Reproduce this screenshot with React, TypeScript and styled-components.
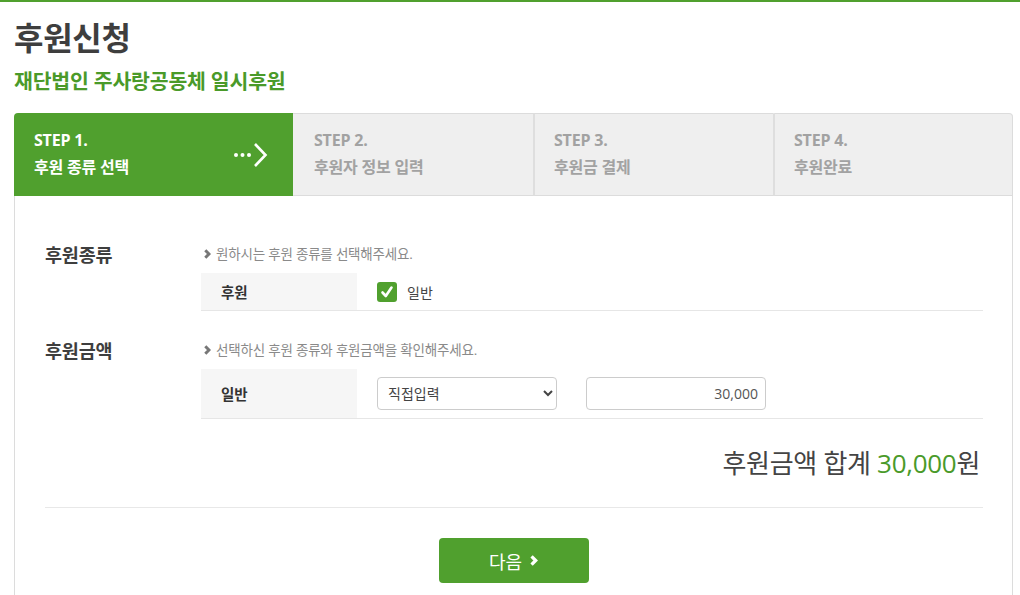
import React from "react";
import styled, { createGlobalStyle } from "styled-components";

const GREEN = "#50a02e";
const FONT = `"Open Sans", "Noto Sans CJK KR", sans-serif`;

const Global = createGlobalStyle`
  html, body { margin: 0; padding: 0; background: #fff; }
  body { font-family: ${FONT}; color: #444; }
  * { box-sizing: border-box; }
`;

const Page = styled.div`
  border-top: 2px solid ${GREEN};
  padding: 16px 0 0 14px;
  width: 1020px;
  height: 595px;
  overflow: hidden;
`;

const Title = styled.h1`
  margin: 0;
  font-size: 32px;
  line-height: 40px;
  font-weight: 700;
  color: #3e3e3e;
  letter-spacing: -0.3px;
`;

const Subtitle = styled.h2`
  margin: 10px 0 0;
  font-size: 20.5px;
  line-height: 26px;
  font-weight: 700;
  color: #4a9a29;
  letter-spacing: -0.2px;
`;

const Steps = styled.div`
  margin-top: 19px;
  width: 999px;
  display: grid;
  grid-template-columns: 279px 240px 240px 240px;
  height: 83px;
`;

const Step = styled.div<{ $active?: boolean; $last?: boolean; $divider?: boolean }>`
  position: relative;
  padding: ${(p) => (p.$active ? 14 : 13)}px 20px 0 ${(p) => (p.$divider ? 19 : p.$active ? 20 : 21)}px;
  background: ${(p) => (p.$active ? GREEN : "#efefef")};
  color: ${(p) => (p.$active ? "#fff" : "#a2a2a2")};
  border-top: ${(p) => (p.$active ? "none" : "1px solid #dcdcdc")};
  border-bottom: ${(p) => (p.$active ? "none" : "1px solid #dcdcdc")};
  border-left: ${(p) => (p.$divider ? "2px solid #dedede" : "none")};
  border-right: ${(p) => (p.$last ? "1px solid #dcdcdc" : "none")};
  border-radius: ${(p) => (p.$active ? "4px 0 0 0" : p.$last ? "0 4px 0 0" : "0")};
  font-weight: 700;
  font-size: 16px;
  line-height: 27px;
`;

const StepLine = styled.div`
  white-space: nowrap;
  letter-spacing: -0.2px;
`;

const StepArrow = styled.svg`
  position: absolute;
  right: 24px;
  top: 29px;
`;

const Panel = styled.div`
  width: 999px;
  border-left: 1px solid #dcdcdc;
  border-right: 1px solid #dcdcdc;
  padding: 48px 29px 40px 30px;
  height: 420px;
`;

const Section = styled.div<{ $gap?: number }>`
  display: grid;
  grid-template-columns: 156px 1fr;
  margin-top: ${(p) => p.$gap ?? 0}px;
`;

const SectionTitle = styled.div`
  font-size: 18.5px;
  line-height: 20px;
  font-weight: 700;
  color: #3e3e3e;
  letter-spacing: -0.2px;
  padding-top: 1px;
`;

const Hint = styled.div`
  display: flex;
  align-items: center;
  gap: 5px;
  font-size: 13.5px;
  line-height: 20px;
  color: #8a8a8a;
  letter-spacing: -0.2px;
  padding-left: 3px;
`;

const Row = styled.div<{ $h: number }>`
  margin-top: 9px;
  display: grid;
  grid-template-columns: 156px 1fr;
  height: ${(p) => p.$h + 1}px;
  border-bottom: 1px solid #e6e6e6;
`;

const RowLabel = styled.div`
  background: #f6f6f6;
  padding-left: 20px;
  display: flex;
  align-items: center;
  font-size: 14.5px;
  font-weight: 700;
  color: #333;
`;

const RowBody = styled.div`
  padding-left: 20px;
  display: flex;
  align-items: center;
  gap: 29px;
`;

const CheckLabel = styled.label`
  display: flex;
  align-items: center;
  gap: 10px;
  font-size: 14px;
  color: #444;
`;

const CheckBox = styled.span`
  width: 20px;
  height: 20px;
  border-radius: 3px;
  background: ${GREEN};
  display: flex;
  align-items: center;
  justify-content: center;
`;

const Select = styled.select`
  width: 180px;
  height: 33px;
  border: 1px solid #cccccc;
  border-radius: 4px;
  background: #fff;
  padding: 0 6px;
  font-family: ${FONT};
  font-size: 14px;
  color: #444;
`;

const Input = styled.input`
  width: 180px;
  height: 33px;
  border: 1px solid #cccccc;
  border-radius: 4px;
  padding: 0 7px;
  text-align: right;
  font-family: ${FONT};
  font-size: 14px;
  color: #555;
`;

const Total = styled.div`
  margin-top: 27px;
  text-align: right;
  padding-right: 3px;
  font-size: 26px;
  line-height: 34px;
  color: #444;
  letter-spacing: -0.3px;
`;

const Amount = styled.span`
  color: #4a9a29;
  font-weight: 500;
`;

const Divider = styled.hr`
  margin: 27px 0 0;
  border: none;
  border-top: 1px solid #e8e8e8;
`;

const ButtonRow = styled.div`
  display: flex;
  justify-content: center;
  margin-top: 30px;
`;

const NextButton = styled.button`
  width: 150px;
  height: 45px;
  border: none;
  border-radius: 4px;
  background: ${GREEN};
  color: #fff;
  font-family: ${FONT};
  font-size: 18px;
  display: flex;
  align-items: center;
  justify-content: center;
  gap: 8px;
  margin-right: 1px;
`;

const Chevron = ({ color, w = 7, h = 10 }: { color: string; w?: number; h?: number }) => (
  <svg width={w} height={h} viewBox="0 0 7 10">
    <path d="M1.3 1.3 L5 5 L1.3 8.7" fill="none" stroke={color} strokeWidth="3" strokeLinejoin="miter" />
  </svg>
);

export default function App() {
  return (
    <>
      <Global />
      <Page>
        <Title>후원신청</Title>
        <Subtitle>재단법인 주사랑공동체 일시후원</Subtitle>
        <Steps>
          <Step $active>
            <StepLine>STEP 1.</StepLine>
            <StepLine>후원 종류 선택</StepLine>
            <StepArrow width="36" height="26" viewBox="0 0 36 26">
              <circle cx="3" cy="13" r="2" fill="#fff" />
              <circle cx="9.5" cy="13" r="2" fill="#fff" />
              <circle cx="16" cy="13" r="2" fill="#fff" />
              <path d="M22 2 L32.5 13 L22 24" fill="none" stroke="#fff" strokeWidth="2.6" />
            </StepArrow>
          </Step>
          <Step>
            <StepLine>STEP 2.</StepLine>
            <StepLine>후원자 정보 입력</StepLine>
          </Step>
          <Step $divider>
            <StepLine>STEP 3.</StepLine>
            <StepLine>후원금 결제</StepLine>
          </Step>
          <Step $divider $last>
            <StepLine>STEP 4.</StepLine>
            <StepLine>후원완료</StepLine>
          </Step>
        </Steps>
        <Panel>
          <Section>
            <SectionTitle>후원종류</SectionTitle>
            <div>
              <Hint>
                <Chevron color="#777" w={7} h={10} />
                원하시는 후원 종류를 선택해주세요.
              </Hint>
              <Row $h={37}>
                <RowLabel>후원</RowLabel>
                <RowBody>
                  <CheckLabel>
                    <CheckBox>
                      <svg width="14" height="14" viewBox="0 0 14 14">
                        <path d="M2.5 7.5 L5.8 11 L11.5 2.5" fill="none" stroke="#fff" strokeWidth="2.6" strokeLinecap="round" strokeLinejoin="round" />
                      </svg>
                    </CheckBox>
                    일반
                  </CheckLabel>
                </RowBody>
              </Row>
            </div>
          </Section>
          <Section $gap={29}>
            <SectionTitle>후원금액</SectionTitle>
            <div>
              <Hint>
                <Chevron color="#777" w={7} h={10} />
                선택하신 후원 종류와 후원금액을 확인해주세요.
              </Hint>
              <Row $h={49}>
                <RowLabel>일반</RowLabel>
                <RowBody>
                  <Select defaultValue="direct">
                    <option value="direct">직접입력</option>
                  </Select>
                  <Input defaultValue="30,000" />
                </RowBody>
              </Row>
            </div>
          </Section>
          <Total>
            후원금액 합계 <Amount>30,000</Amount>원
          </Total>
          <Divider />
          <ButtonRow>
            <NextButton>
              다음
              <Chevron color="#fff" w={8} h={11} />
            </NextButton>
          </ButtonRow>
        </Panel>
      </Page>
    </>
  );
}
